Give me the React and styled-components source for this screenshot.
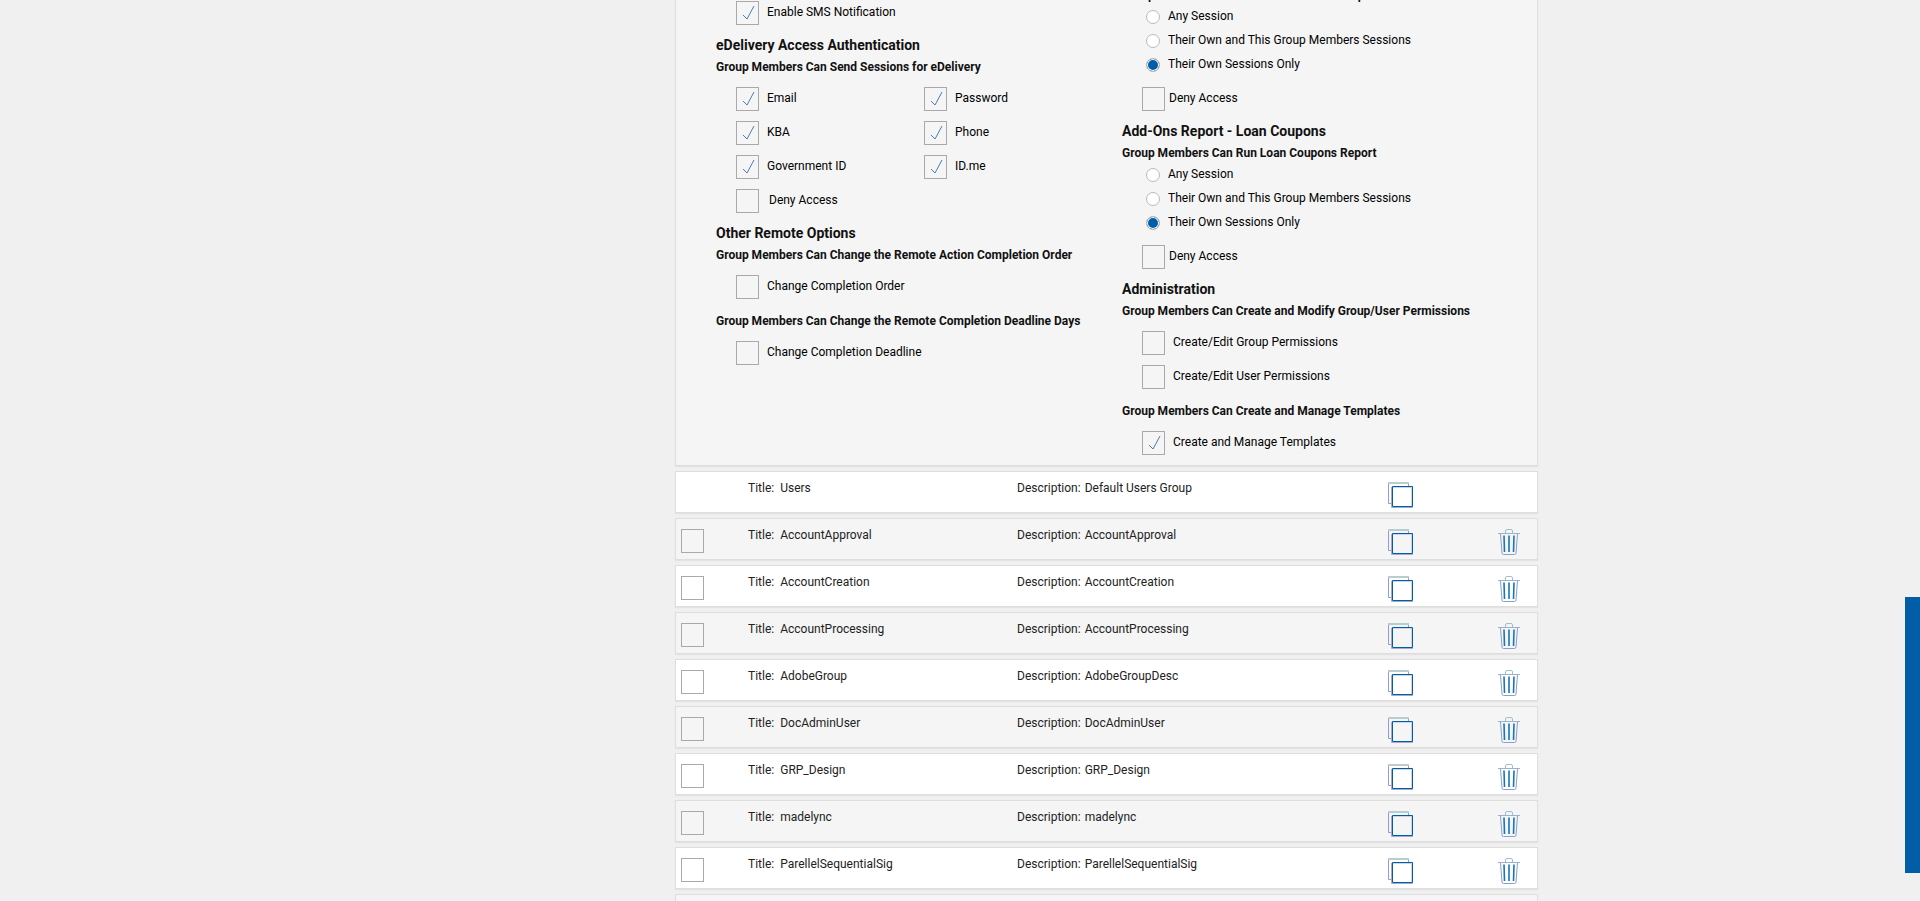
import styled, { createGlobalStyle } from 'styled-components';

const GlobalStyle = createGlobalStyle`
  * {
    box-sizing: border-box;
  }
  body {
    margin: 0;
    background: #f0f0f0;
    color: #000;
    font-family: Roboto, "Liberation Sans", sans-serif;
    font-size: 12px;
    line-height: 18px;
  }
`;

const Page = styled.div`
  padding-right: 15px;
  overflow: hidden;
  height: 100vh;
`;

const Container = styled.div`
  max-width: 1171px;
  margin: 0 auto;
  display: grid;
  grid-template-columns: 308px 1fr;
`;

const Main = styled.main`
  grid-column: 2;
`;

const SideTab = styled.aside`
  position: fixed;
  right: 0;
  bottom: 28px;
  width: 15px;
  height: 276px;
  background: #005da6;
`;

const Card = styled.section`
  background: ${(p) => (p.$white ? '#fff' : '#f5f5f5')};
  border: 1px solid #dedede;
  box-shadow: 0 1px 1px rgba(0, 0, 0, 0.05);
  margin-bottom: 5px;
`;

const Permissions = styled(Card)`
  display: grid;
  grid-template-columns: 406px 1fr;
  padding: 0 40px 10px;
  border-top: 0;
`;

const Column = styled.div`
  margin-top: ${(p) => p.$scrolled || 0}px;
`;

const Heading = styled.h3`
  margin: 7px 0 0;
  font-size: 14px;
  font-weight: 700;
  line-height: 26px;
  color: #111;
`;

const SubHeading = styled.h4`
  margin: ${(p) => (p.$spaced ? '13px 0 0' : '0')};
  font-size: 12px;
  font-weight: 700;
  line-height: 18px;
  color: #111;
`;

const Options = styled.div`
  padding: ${(p) => (p.$tight ? '9px' : '11px')} 0 0 20px;
  display: grid;
  grid-template-columns: ${(p) => (p.$cols ? '188px 1fr' : '1fr')};
  row-gap: 10px;
`;

const Option = styled.label`
  display: flex;
  gap: ${(p) => p.$gap || 8}px;
  height: 24px;
  line-height: 22px;
`;

const Box = styled.input`
  appearance: none;
  flex: none;
  width: 23px;
  height: 24px;
  margin: 0;
  border: 1px solid #a9a9a9;
`;

const BoxWrap = styled.span`
  position: relative;
  display: flex;
  flex: none;

  svg {
    position: absolute;
    left: 6px;
    top: 4px;
  }
`;

const Radios = styled.div`
  padding: 2px 0 0 24px;
`;

const RadioLabel = styled.label`
  display: flex;
  align-items: flex-start;
  gap: 8px;
  height: 24px;
  line-height: 20px;
`;

const Radio = styled.input`
  appearance: none;
  flex: none;
  width: 14px;
  height: 14px;
  margin: 4px 0 0;
  border: 1px solid #bbb;
  border-radius: 50%;
  background: #fff;

  &:checked {
    background: #005da6;
    box-shadow: inset 0 0 0 1px #fff;
  }
`;

const Row = styled(Card)`
  display: grid;
  grid-template-columns: 67px 269px 370px 109px 1fr;
  height: 42px;
  padding: 7px 0 0 5px;
  color: #222;
`;

const RowBox = styled(Box)`
  margin-top: 3px;
`;

const Value = styled.span`
  margin-left: ${(p) => p.$left}px;
`;

const IconButton = styled.button`
  display: flex;
  justify-content: center;
  width: 26px;
  height: 26px;
  padding: 0;
  margin-top: 3px;
  border: 0;
  background: none;

  svg {
    flex: none;
  }
`;

const Check = () => (
  <svg width="13" height="16" viewBox="0 0 13 16" fill="none" stroke="#4a7db5" strokeWidth="1">
    <path d="M1 10l4 4L12 1" />
  </svg>
);

const CopyIcon = () => (
  <svg width="26" height="26" viewBox="0 0 26 26" fill="none">
    <path d="M4 21.500H1.500V1M21.500 4V1" stroke="#8f9fd2" />
    <path d="M1 1H22" stroke="#b9cdd0" strokeWidth="2" />
    <path d="M4.500 5V25.500H26" stroke="#a9a9d0" />
    <path d="M6 5.500h19M24.500 5v19" stroke="#cdd6e0" />
    <path d="M5.500 4.500h20v20h-20z" stroke="#005da6" />
  </svg>
);

const TrashIcon = () => (
  <svg width="22" height="26" viewBox="0 0 22 26" fill="none">
    <path d="M7.500 4V2q0-1.500 1.500-1.500h4q1.500 0 1.500 1.500v2" stroke="#9fc0c8" />
    <path d="M0 4.500h22" stroke="#9db1cc" />
    <path d="M2.500 5l1.500 19q0 1.500 1.500 1.500h11q1.500 0 1.500-1.500l1.500-19" stroke="#8a9fcb" />
    <path d="M6 6.500l.5 16.500M11 6.500v16.500M16 6.500l-.5 16.500" stroke="#1a74b8" strokeWidth="1.600" />
  </svg>
);

const CheckOption = ({ label, checked, gap }) => (
  <Option $gap={gap}>
    <BoxWrap>
      <Box type="checkbox" defaultChecked={checked} />
      {checked && <Check />}
    </BoxWrap>
    {label}
  </Option>
);

const SessionRadios = ({ name }) => (
  <>
    <Radios>
      <RadioLabel><Radio type="radio" name={name} />Any Session</RadioLabel>
      <RadioLabel><Radio type="radio" name={name} />Their Own and This Group Members Sessions</RadioLabel>
      <RadioLabel><Radio type="radio" name={name} defaultChecked />Their Own Sessions Only</RadioLabel>
    </Radios>
    <Options $tight>
      <CheckOption label="Deny Access" gap={4} />
    </Options>
  </>
);

const groups = [
  { title: 'Users', description: 'Default Users Group', locked: true },
  { title: 'AccountApproval', description: 'AccountApproval' },
  { title: 'AccountCreation', description: 'AccountCreation' },
  { title: 'AccountProcessing', description: 'AccountProcessing' },
  { title: 'AdobeGroup', description: 'AdobeGroupDesc' },
  { title: 'DocAdminUser', description: 'DocAdminUser' },
  { title: 'GRP_Design', description: 'GRP_Design' },
  { title: 'madelync', description: 'madelync' },
  { title: 'ParellelSequentialSig', description: 'ParellelSequentialSig' },
];

const App = () => {
  return (
    <Page>
      <GlobalStyle />
      <Container>
        <Main>
          <Permissions>
            <Column $scrolled={-10}>
              <Options>
                <CheckOption label="Enable SMS Notification" checked />
              </Options>
              <Heading>eDelivery Access Authentication</Heading>
              <SubHeading>Group Members Can Send Sessions for eDelivery</SubHeading>
              <Options $cols>
                <CheckOption label="Email" checked />
                <CheckOption label="Password" checked />
                <CheckOption label="KBA" checked />
                <CheckOption label="Phone" checked />
                <CheckOption label="Government ID" checked />
                <CheckOption label="ID.me" checked />
                <CheckOption label="Deny Access" gap={10} />
              </Options>
              <Heading>Other Remote Options</Heading>
              <SubHeading>Group Members Can Change the Remote Action Completion Order</SubHeading>
              <Options>
                <CheckOption label="Change Completion Order" />
              </Options>
              <SubHeading $spaced>Group Members Can Change the Remote Completion Deadline Days</SubHeading>
              <Options>
                <CheckOption label="Change Completion Deadline" />
              </Options>
            </Column>
            <Column $scrolled={-14}>
              <SubHeading>Group Members Can Run Session Status Report</SubHeading>
              <SessionRadios name="status" />
              <Heading>Add-Ons Report - Loan Coupons</Heading>
              <SubHeading>Group Members Can Run Loan Coupons Report</SubHeading>
              <SessionRadios name="coupons" />
              <Heading>Administration</Heading>
              <SubHeading>Group Members Can Create and Modify Group/User Permissions</SubHeading>
              <Options>
                <CheckOption label="Create/Edit Group Permissions" />
                <CheckOption label="Create/Edit User Permissions" />
              </Options>
              <SubHeading $spaced>Group Members Can Create and Manage Templates</SubHeading>
              <Options>
                <CheckOption label="Create and Manage Templates" checked />
              </Options>
            </Column>
          </Permissions>
          {groups.map((group, i) => (
            <Row key={group.title} $white={i % 2 === 0}>
              {group.locked ? <span /> : <RowBox type="checkbox" aria-label={`Select ${group.title}`} />}
              <span>Title:<Value $left={6}>{group.title}</Value></span>
              <span>Description:<Value $left={4}>{group.description}</Value></span>
              <IconButton aria-label={`Copy ${group.title}`}><CopyIcon /></IconButton>
              {!group.locked && (
                <IconButton aria-label={`Delete ${group.title}`}><TrashIcon /></IconButton>
              )}
            </Row>
          ))}
          <Row />
        </Main>
      </Container>
      <SideTab />
    </Page>
  );
};

export default App;
